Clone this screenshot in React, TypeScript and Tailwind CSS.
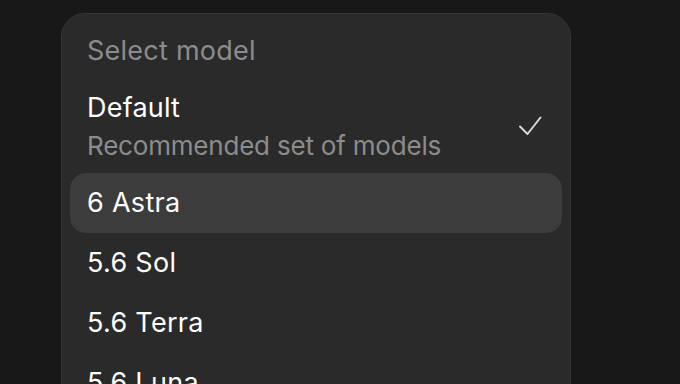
import React from 'react'

const models = ['6 Astra', '5.6 Sol', '5.6 Terra', '5.6 Luna']

export default function App() {
  return (
    <main className="w-[680px] h-[384px] overflow-hidden bg-[#181818] font-['Inter',sans-serif]">
      <div className="ml-[61px] mt-[13px] w-[510px] rounded-[24px] border border-[#353535] bg-[#2a2a2a] px-[8px] pt-[21px] pb-4">
        {/* header */}
        <div className="px-[17px] text-[27px] leading-[32px] tracking-[0.25px] text-[#8c8c8c]">Select model</div>

        {/* default option */}
        <div className="mt-[25px] flex items-center justify-between px-[17px] pb-[12px]">
          <div>
            <div className="text-[27px] leading-[32px] tracking-[0.2px] text-white">Default</div>
            <div className="mt-[7px] text-[26px] leading-[30px] tracking-[-0.2px] text-[#8c8c8c]">Recommended set of models</div>
          </div>
          <svg width="24" height="22" viewBox="0 0 24 22" fill="none" className="mr-[3px] mb-[2px]">
            <path d="M2 11.5 L9.5 19 L22.5 2.5" stroke="#d8d8d8" strokeWidth="2" strokeLinecap="round" strokeLinejoin="round" />
          </svg>
        </div>

        {/* model list */}
        {models.map((m, i) => (
          <div
            key={m}
            className={`flex h-[60px] items-center rounded-[16px] px-[17px] text-[27px] leading-[32px] tracking-[0.3px] text-white ${
              i === 0 ? 'bg-[#3c3c3c]' : ''
            }`}
          >
            {m}
          </div>
        ))}
      </div>
    </main>
  )
}
